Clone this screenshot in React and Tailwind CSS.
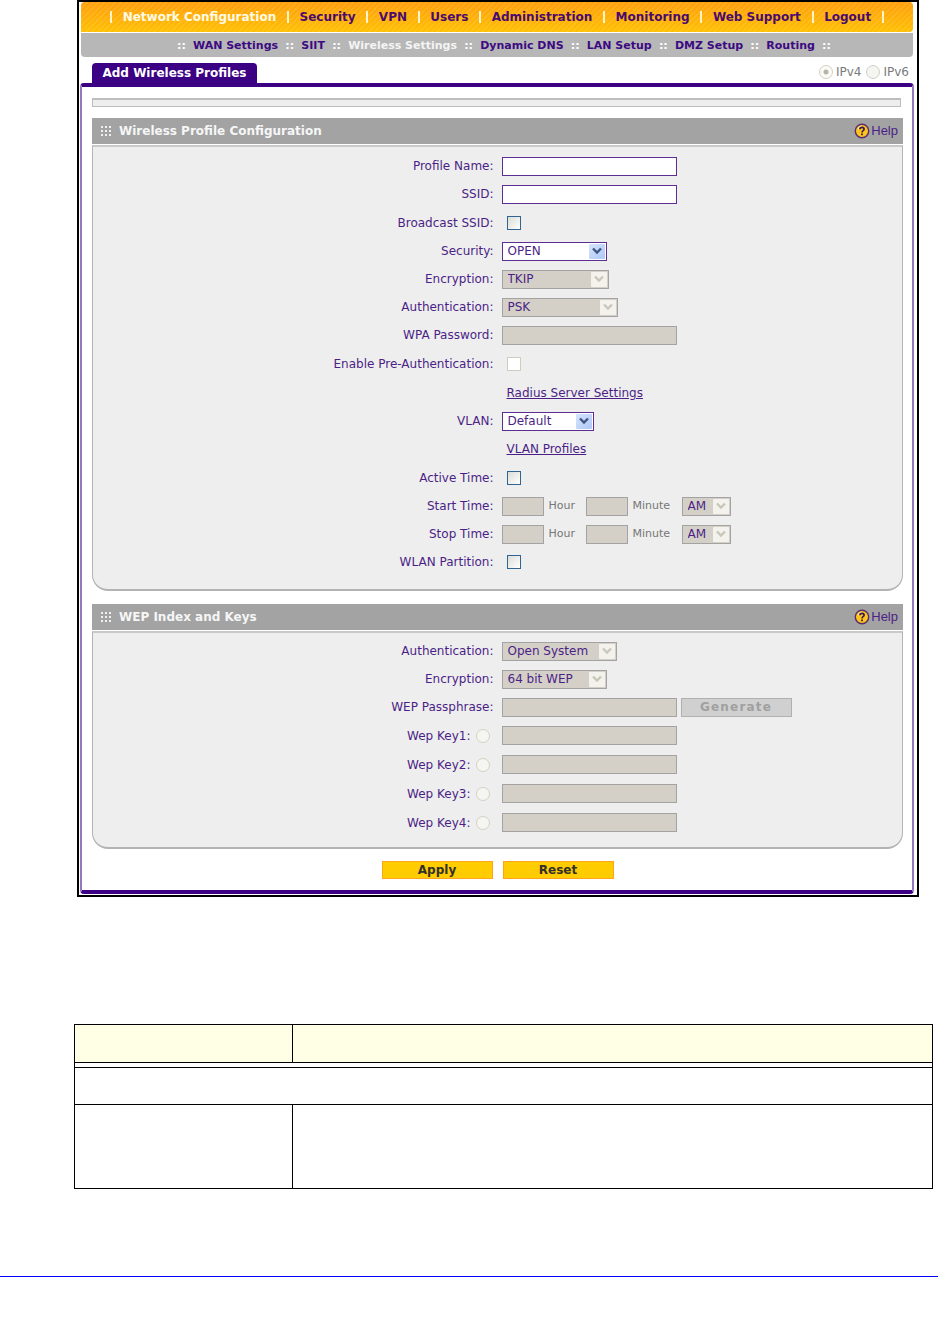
import { useState } from 'react';
import clsx from 'clsx';

const MAIN_MENU = [
  'Network Configuration',
  'Security',
  'VPN',
  'Users',
  'Administration',
  'Monitoring',
  'Web Support',
  'Logout',
];

const SUB_MENU = [
  'WAN Settings',
  'SIIT',
  'Wireless Settings',
  'Dynamic DNS',
  'LAN Setup',
  'DMZ Setup',
  'Routing',
];

const WEP_KEYS = [1, 2, 3, 4];

function MainMenu() {
  return (
    <nav
      aria-label="Main"
      className="mx-px flex h-[30px] items-center justify-between rounded-t-sm rounded-br-sm bg-[repeating-linear-gradient(135deg,rgba(255,255,255,0.1)_0px,rgba(255,255,255,0.1)_1px,transparent_2px,transparent_4px),linear-gradient(#ff9f0c,#ffc003)] px-[29px] text-[12px] font-bold"
    >
      <span className="h-3 w-0.5 bg-[#fff3c8]" />
      {MAIN_MENU.map((item, i) => (
        <div key={item} className="contents">
          <a href="#" className={i === 0 ? 'text-[#fffbe6]' : 'text-[#4a0a6e]'}>
            {item}
          </a>
          <span className="h-3 w-0.5 bg-[#fff3c8]" />
        </div>
      ))}
    </nav>
  );
}

function SubMenu() {
  return (
    <nav
      aria-label="Network Configuration"
      className="mx-px mt-px flex h-6 items-center justify-between rounded-b-sm bg-[#b7b7b7] pt-0.5 pr-[82px] pl-[96px] text-[11px] font-bold"
    >
      <span className="text-white">::</span>
      {SUB_MENU.map((item) => (
        <div key={item} className="contents">
          <a
            href="#"
            className={item === 'Wireless Settings' ? 'text-[#f4f4f4]' : 'text-[#3c0a82]'}
          >
            {item}
          </a>
          <span className="text-white">::</span>
        </div>
      ))}
    </nav>
  );
}

function Radio({ className, ...props }) {
  return (
    <input
      type="radio"
      className={clsx(
        'size-[14px] shrink-0 appearance-none rounded-full border border-[#d3d1c2] bg-[#f5f5f2] checked:bg-[radial-gradient(circle,#b4b3a4_0px,#b4b3a4_2px,#fbfbf8_3px)]',
        className
      )}
      {...props}
    />
  );
}

function Checkbox(props) {
  return (
    <input
      type="checkbox"
      className="ml-[5px] size-[14px] appearance-none border border-[#2f6590] bg-[linear-gradient(135deg,#dcdcd7,#ffffff)] checked:bg-[#2f6590] disabled:border-[#cfcdbf] disabled:bg-white disabled:bg-none"
      {...props}
    />
  );
}

function TextInput({ className = 'w-[175px]', ...props }) {
  return (
    <input
      type="text"
      className={clsx(
        'h-[19px] border border-[#5d2d91] bg-white px-1 text-[12px] text-[#4b1f86] outline-none disabled:border-[#a3a3a3] disabled:bg-[#d4d0c8]',
        className
      )}
      {...props}
    />
  );
}

function Select({ className, options, disabled, ...props }) {
  return (
    <div className={clsx('relative h-[19px]', className)}>
      <select
        disabled={disabled}
        className="block h-full w-full appearance-none border border-[#5d2d91] bg-white pl-[5px] text-[12px] leading-[17px] text-[#4b1f86] outline-none disabled:border-[#a3a3a3] disabled:bg-[#d4d0c8] disabled:opacity-100"
        {...props}
      >
        {options.map((o) => (
          <option key={o}>{o}</option>
        ))}
      </select>
      <span
        className={clsx(
          'pointer-events-none absolute top-0.5 right-0.5 bottom-0.5 flex w-4 items-center justify-center rounded-[1px]',
          disabled ? 'bg-[#f3f2ec] text-[#c8c7b9]' : 'bg-[linear-gradient(135deg,#d6e3fd,#aec8f7)] text-[#3f5683]'
        )}
      >
        <svg viewBox="0 0 10 8" className="h-2 w-2.5" fill="none" stroke="currentColor" strokeWidth="2.4" aria-hidden="true">
          <path d="M1 1.5 L5 5.5 L9 1.5" />
        </svg>
      </span>
    </div>
  );
}

function Row({ label, htmlFor, tall, radio, children }) {
  return (
    <div className={clsx('grid grid-cols-2 items-center', tall ? 'h-[29px]' : 'h-7')}>
      <div className="flex items-center justify-end gap-1 pr-1">
        {label && <label htmlFor={htmlFor}>{label}</label>}
        {radio}
      </div>
      <div className="flex items-center pl-1">{children}</div>
    </div>
  );
}

function HelpLink() {
  return (
    <a href="#" className="flex items-center gap-px font-['Liberation_Sans',Arial,sans-serif] text-[13px] text-[#4b1f86]">
      <svg viewBox="0 0 16 16" className="size-4" aria-hidden="true">
        <circle cx="8" cy="8" r="6.7" fill="#fdc51c" stroke="#5a2d6e" strokeWidth="1.4" />
        <path d="M4 6.5 A4.5 4.5 0 0 1 8 3" fill="none" stroke="#ffe694" strokeWidth="1.2" />
        <path d="M5.9 6.3 C5.9 3.7 10.1 3.8 10.1 6.2 C10.1 7.7 8 7.6 8 9.4" fill="none" stroke="#3a1a55" strokeWidth="1.7" />
        <rect x="7.1" y="10.5" width="1.8" height="1.7" fill="#3a1a55" />
      </svg>
      Help
    </a>
  );
}

function GripIcon() {
  return (
    <svg viewBox="0 0 10 10" className="size-2.5" fill="#f0f0f0" aria-hidden="true">
      {[0, 4, 8].map((y) =>
        [0, 4, 8].map((x) => <rect key={`${x}-${y}`} x={x} y={y} width="2" height="2" />)
      )}
    </svg>
  );
}

function Section({ title, className, children }) {
  return (
    <section>
      <div className="flex h-[26px] items-center justify-between bg-[#a3a3a3] pr-[5px] pl-[9px]">
        <h2 className="flex items-center gap-2 text-[12px] font-bold text-[#f6f6f6]">
          <GripIcon />
          {title}
        </h2>
        <HelpLink />
      </div>
      <div
        className={clsx(
          'mt-px rounded-b-[16px] border border-t-2 border-b-2 border-[#b3b3b3] border-t-[#c9c9c9] bg-[#eeeeee] text-[12px] text-[#4b1f86]',
          className
        )}
      >
        {children}
      </div>
    </section>
  );
}

function TimeRow({ label, id }) {
  return (
    <Row label={label} htmlFor={`${id}-hour`}>
      <TextInput id={`${id}-hour`} className="w-[42px]" disabled />
      <label htmlFor={`${id}-hour`} className="w-[42px] pl-[5px] text-[11px] text-[#777777]">
        Hour
      </label>
      <TextInput id={`${id}-minute`} className="w-[42px]" disabled />
      <label htmlFor={`${id}-minute`} className="w-[54px] pl-[5px] text-[11px] text-[#777777]">
        Minute
      </label>
      <Select aria-label={`${label} AM or PM`} className="w-[49px]" options={['AM', 'PM']} disabled />
    </Row>
  );
}

function ProfileSection() {
  const [form, setForm] = useState({ name: '', ssid: '' });

  return (
    <Section title="Wireless Profile Configuration" className="pt-[5px] pb-[13px]">
      <Row label="Profile Name:" htmlFor="name">
        <TextInput id="name" value={form.name} onChange={(e) => setForm({ ...form, name: e.target.value })} />
      </Row>
      <Row label="SSID:" htmlFor="ssid">
        <TextInput id="ssid" value={form.ssid} onChange={(e) => setForm({ ...form, ssid: e.target.value })} />
      </Row>
      <Row label="Broadcast SSID:" htmlFor="broadcast" tall>
        <Checkbox id="broadcast" />
      </Row>
      <Row label="Security:" htmlFor="security">
        <Select id="security" className="w-[105px]" options={['OPEN', 'WEP', 'WPA', 'WPA2']} />
      </Row>
      <Row label="Encryption:" htmlFor="encryption">
        <Select id="encryption" className="w-[107px]" options={['TKIP']} disabled />
      </Row>
      <Row label="Authentication:" htmlFor="auth">
        <Select id="auth" className="w-[116px]" options={['PSK']} disabled />
      </Row>
      <Row label="WPA Password:" htmlFor="wpa">
        <TextInput id="wpa" type="password" disabled />
      </Row>
      <Row label="Enable Pre-Authentication:" htmlFor="preauth" tall>
        <Checkbox id="preauth" disabled />
      </Row>
      <Row tall>
        <a href="#" className="ml-[5px] underline">Radius Server Settings</a>
      </Row>
      <Row label="VLAN:" htmlFor="vlan">
        <Select id="vlan" className="w-[92px]" options={['Default']} />
      </Row>
      <Row>
        <a href="#" className="ml-[5px] underline">VLAN Profiles</a>
      </Row>
      <Row label="Active Time:" htmlFor="active" tall>
        <Checkbox id="active" />
      </Row>
      <TimeRow label="Start Time:" id="start" />
      <TimeRow label="Stop Time:" id="stop" />
      <Row label="WLAN Partition:" htmlFor="partition">
        <Checkbox id="partition" />
      </Row>
    </Section>
  );
}

function WepSection() {
  return (
    <Section title="WEP Index and Keys" className="pt-1 pb-2.5">
      <Row label="Authentication:" htmlFor="wep-auth">
        <Select id="wep-auth" className="w-[115px]" options={['Open System']} disabled />
      </Row>
      <Row label="Encryption:" htmlFor="wep-encryption">
        <Select id="wep-encryption" className="w-[105px]" options={['64 bit WEP']} disabled />
      </Row>
      <Row label="WEP Passphrase:" htmlFor="passphrase">
        <TextInput id="passphrase" disabled />
        <button
          type="button"
          disabled
          className="ml-1 h-[19px] w-[111px] border border-[#b0b0b0] bg-[#d0d0d0] text-[12px] leading-[17px] font-bold tracking-widest text-[#a0a0a0]"
        >
          Generate
        </button>
      </Row>
      {WEP_KEYS.map((n) => (
        <Row
          key={n}
          tall
          label={`Wep Key${n}:`}
          htmlFor={`key${n}`}
          radio={<Radio name="wep-key" aria-label={`Use Wep Key${n}`} className="mr-1 ml-px" disabled />}
        >
          <TextInput id={`key${n}`} disabled />
        </Row>
      ))}
    </Section>
  );
}

export default function App() {
  return (
    <main className="bg-white font-['DejaVu_Sans',Verdana,sans-serif]">
      <div className="mr-[22px] ml-[77px] border-2 border-black bg-white pr-[3px] pb-px pl-px">
        <MainMenu />
        <SubMenu />

        <div className="flex h-[26px] items-end justify-between pr-[5px] pl-3">
          <h1 className="flex h-5 w-[165px] items-center justify-center rounded-t-[4px] bg-[#3b0083] text-[12px] font-bold whitespace-nowrap text-white">
            Add Wireless Profiles
          </h1>
          <div className="flex items-center gap-[3px] self-center pt-1 text-[12px] text-[#7a7a7a]">
            <Radio id="ipv4" name="ip" defaultChecked disabled />
            <label htmlFor="ipv4" className="pr-0.5">IPv4</label>
            <Radio id="ipv6" name="ip" disabled />
            <label htmlFor="ipv6">IPv6</label>
          </div>
        </div>

        <form
          onSubmit={(e) => e.preventDefault()}
          className="rounded-[4px] border-x-2 border-y-4 border-x-[#9478bd] border-y-[#3b0083] pt-[11px] pr-[9px] pl-2.5"
        >
          <div className="mr-0.5 mb-[11px] h-[9px] border border-t-2 border-[#bdbdbd] bg-[#eeeeee]" />
          <ProfileSection />
          <div className="h-[13px]" />
          <WepSection />
          <div className="flex justify-center gap-2.5 pt-3 pb-[11px] text-[12px] leading-4 font-bold text-[#33302a]">
            <button type="submit" className="h-[18px] w-[111px] border border-[#ffa519] bg-[#ffcc00]">
              Apply
            </button>
            <button type="reset" className="h-[18px] w-[111px] border border-[#ffa519] bg-[#ffcc00]">
              Reset
            </button>
          </div>
        </form>
      </div>

      <div className="mt-[127px] mr-2 ml-[74px]">
        <table className="w-full table-fixed border-collapse border border-black">
          <colgroup>
            <col className="w-[218px]" />
            <col />
          </colgroup>
          <thead>
            <tr className="bg-[#ffffe5]">
              <th className="h-[38px] border border-black p-0" />
              <th className="border border-black p-0" />
            </tr>
          </thead>
          <tbody>
            <tr>
              <td colSpan={2} className="h-[5px] border border-black p-0" />
            </tr>
            <tr>
              <td colSpan={2} className="h-[37px] border border-black p-0" />
            </tr>
            <tr>
              <td className="h-[84px] border border-black p-0" />
              <td className="border border-black p-0" />
            </tr>
          </tbody>
        </table>
      </div>

      <hr className="mt-[87px] mr-[3px] mb-[67px] h-px border-0 bg-[#0000ff]" />
    </main>
  );
}
